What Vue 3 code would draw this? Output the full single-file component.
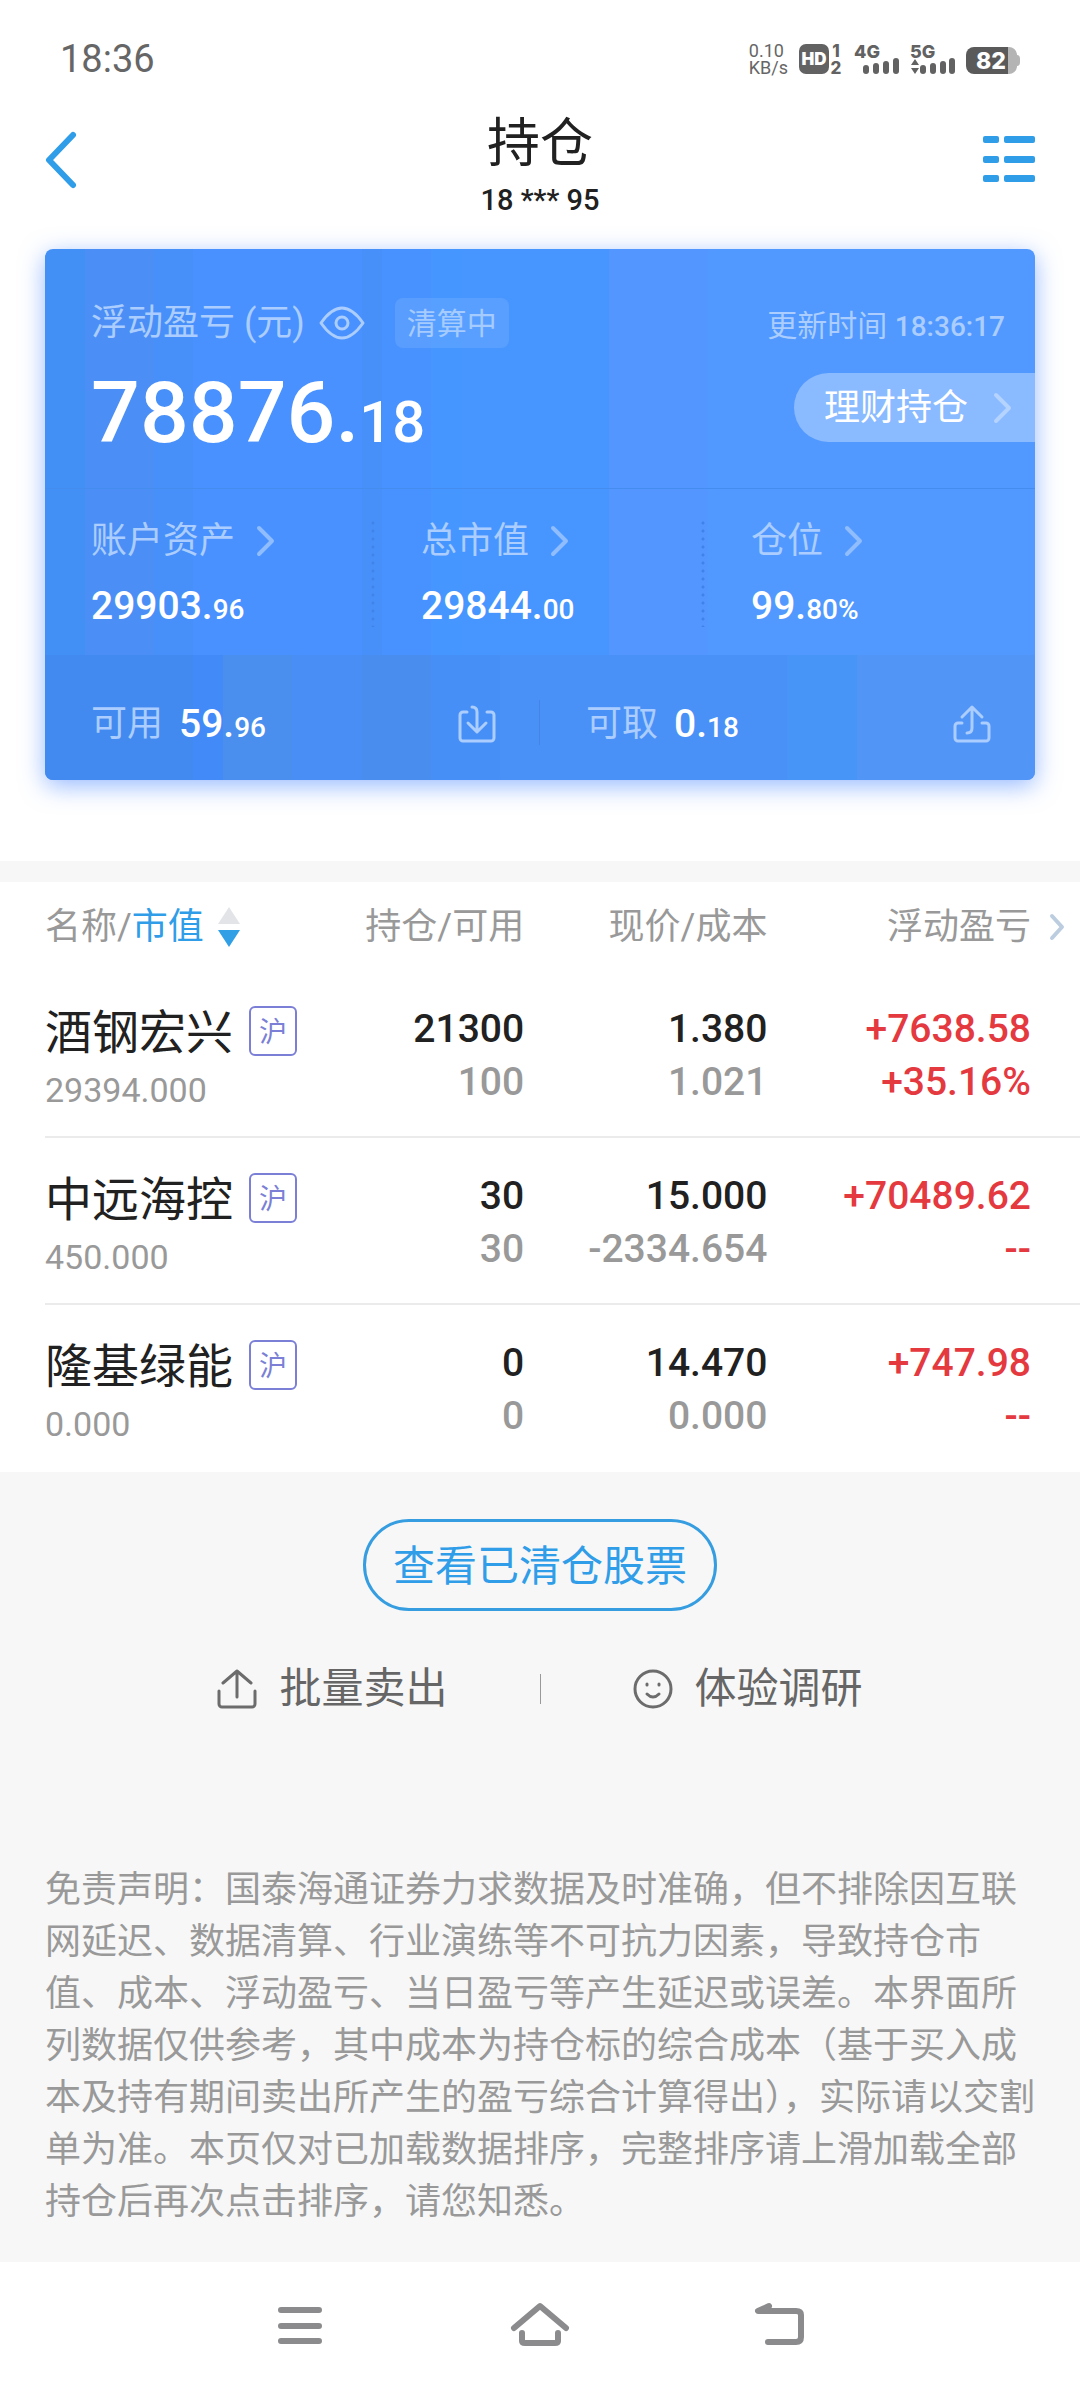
<template>
  <div class="page">
    <div class="status">
      <span class="status-time">18:36</span>
      <div class="status-icons">
        <span class="speed">0.10<br />KB/s</span>
        <svg width="44" height="32" viewBox="0 0 44 32">
          <rect x="0" y="1" width="30" height="30" rx="7" fill="#626262" />
          <text x="15" y="22" class="svg-text" font-size="17" font-weight="900" fill="#fff" text-anchor="middle">HD</text>
          <text x="37" y="14" class="svg-text" font-size="17" font-weight="800" fill="#626262" text-anchor="middle">1</text>
          <text x="37" y="31" class="svg-text" font-size="17" font-weight="800" fill="#626262" text-anchor="middle">2</text>
        </svg>
        <svg width="45" height="32" viewBox="0 0 45 32" fill="#626262">
          <text x="0" y="15" class="svg-text" font-size="18" font-weight="800">4G</text>
          <rect x="9" y="22" width="6" height="9" rx="3" />
          <rect x="19" y="20" width="6" height="11" rx="3" />
          <rect x="29" y="18" width="6" height="13" rx="3" />
          <rect x="39" y="15" width="6" height="16" rx="3" />
        </svg>
        <svg width="45" height="32" viewBox="0 0 45 32" fill="#626262">
          <text x="0" y="15" class="svg-text" font-size="18" font-weight="800">5G</text>
          <path d="M5 16l4 6H1zM5 31l4-6H1z" />
          <rect x="10" y="22" width="6" height="9" rx="3" />
          <rect x="20" y="20" width="6" height="11" rx="3" />
          <rect x="30" y="18" width="6" height="13" rx="3" />
          <rect x="39" y="15" width="6" height="16" rx="3" />
        </svg>
        <svg width="54" height="32" viewBox="0 0 54 32">
          <path d="M42 4h1a8 8 0 0 1 8 7v1q3 0 3 4v3q0 4-3 4v1a8 8 0 0 1-8 7h-1z" fill="#b4b4b4" />
          <path d="M8 4h34v27H8a8 8 0 0 1-8-8V12a8 8 0 0 1 8-8z" fill="#5a5a5a" />
          <text x="25" y="26" class="svg-text" font-size="23" font-weight="800" fill="#fff" text-anchor="middle">82</text>
        </svg>
      </div>
    </div>

    <header class="header">
      <button class="back" aria-label="返回">
        <svg width="31" height="56" viewBox="0 0 31 56">
          <path d="M28 3L4 28l24 25" fill="none" stroke="#2f9de8" stroke-width="6" stroke-linecap="round" stroke-linejoin="round" />
        </svg>
      </button>
      <div class="title">
        <h1>持仓</h1>
        <p>18 *** 95</p>
      </div>
      <button class="menu" aria-label="菜单">
        <svg width="52" height="56" viewBox="0 0 52 56" fill="#2f9de8">
          <rect x="0" y="4" width="16" height="7" rx="2" />
          <rect x="21" y="4" width="31" height="7" rx="2" />
          <rect x="0" y="24" width="16" height="7" rx="2" />
          <rect x="21" y="24" width="31" height="7" rx="2" />
          <rect x="0" y="43" width="16" height="7" rx="2" />
          <rect x="21" y="43" width="31" height="7" rx="2" />
        </svg>
      </button>
    </header>

    <section class="card">
      <div class="summary">
        <div class="summary-top">
          <span class="label">浮动盈亏 (元)</span>
          <button class="eye" aria-label="显示金额" @click="visivel = !visivel">
            <svg width="46" height="34" viewBox="0 0 46 34" fill="none" stroke="#abcdff" stroke-width="3">
              <path d="M2 17C9 7 15 2 23 2s14 5 21 15C37 27 31 32 23 32S9 27 2 17z" stroke-linejoin="round" />
              <circle cx="23" cy="17" r="6" />
            </svg>
          </button>
          <span class="clearing">清算中</span>
          <span class="updated">更新时间 <time>18:36:17</time></span>
        </div>
        <div class="summary-main">
          <strong class="profit">
            <template v-if="visivel">78876.<small>18</small></template>
            <template v-else>****</template>
          </strong>
          <button class="wealth">
            理财持仓
            <svg class="chevron" width="18" height="30" viewBox="0 0 18 30"><path d="M2 2l13 13L2 28" /></svg>
          </button>
        </div>
      </div>

      <div class="assets">
        <div v-for="item in assets" :key="item.label" class="asset">
          <button class="asset-label">
            {{ item.label }}
            <svg class="chevron" width="18" height="30" viewBox="0 0 18 30"><path d="M2 2l13 13L2 28" /></svg>
          </button>
          <div class="amount">{{ item.int }}.<small>{{ item.dec }}</small></div>
        </div>
      </div>

      <div class="cash">
        <div class="cash-item">
          <span class="label">可用</span>
          <span class="amount">59.<small>96</small></span>
          <button aria-label="转入">
            <svg width="38" height="38" viewBox="0 0 38 38" class="line-icon">
              <path d="M9 7H5a3 3 0 0 0-3 3v23a3 3 0 0 0 3 3h28a3 3 0 0 0 3-3V10a3 3 0 0 0-3-3h-4" />
              <path d="M14 2q5 0 5 5v20M10 18l9 9 9-9" />
            </svg>
          </button>
        </div>
        <div class="cash-item">
          <span class="label">可取</span>
          <span class="amount">0.<small>18</small></span>
          <button aria-label="转出">
            <svg width="38" height="38" viewBox="0 0 38 38" class="line-icon">
              <path d="M9 18H5a3 3 0 0 0-3 3v12a3 3 0 0 0 3 3h28a3 3 0 0 0 3-3V21a3 3 0 0 0-3-3h-4" />
              <path d="M14 28q5 0 5-5V2M9 12l10-10 10 10" />
            </svg>
          </button>
        </div>
      </div>
    </section>

    <section class="holdings">
      <table>
        <thead>
          <tr>
            <th class="col-name">
              <button class="sort" @click="desc = !desc">
                <span>名称/<em>市值</em></span>
                <svg width="22" height="40" viewBox="0 0 22 40">
                  <path d="M11 0l11 17H0z" :fill="desc ? '#e2e4e8' : '#309fe6'" />
                  <path d="M11 40l11-17H0z" :fill="desc ? '#309fe6' : '#e2e4e8'" />
                </svg>
              </button>
            </th>
            <th class="col-qty">持仓/可用</th>
            <th class="col-price">现价/成本</th>
            <th class="col-profit">
              <button class="more">
                浮动盈亏
                <svg width="14" height="26" viewBox="0 0 14 26">
                  <path d="M2 2l10 11L2 24" fill="none" stroke="#bccde0" stroke-width="4" stroke-linecap="round" stroke-linejoin="round" />
                </svg>
              </button>
            </th>
          </tr>
        </thead>
        <tbody>
          <tr v-for="s in sortedStocks" :key="s.name">
            <td>
              <div class="stock-name">{{ s.name }}<span class="market">沪</span></div>
              <div class="stock-value">{{ s.value }}</div>
            </td>
            <td class="num">
              <div>{{ s.qty }}</div>
              <div class="muted">{{ s.available }}</div>
            </td>
            <td class="num">
              <div>{{ s.price }}</div>
              <div class="muted">{{ s.cost }}</div>
            </td>
            <td class="num gain">
              <div>{{ s.profit }}</div>
              <div>{{ s.rate }}</div>
            </td>
          </tr>
        </tbody>
      </table>
    </section>

    <section class="footer">
      <button class="cleared">查看已清仓股票</button>
      <div class="actions">
        <button>
          <svg width="40" height="40" viewBox="0 0 40 40" fill="none" stroke="#6c6c6c" stroke-width="3" stroke-linecap="round" stroke-linejoin="round">
            <path d="M2 22v13a3 3 0 0 0 3 3h30a3 3 0 0 0 3-3V22M20 28V2M6 14L20 2l14 12" />
          </svg>
          批量卖出
        </button>
        <i class="bar"></i>
        <button>
          <svg width="40" height="40" viewBox="0 0 40 40" fill="none" stroke="#6c6c6c" stroke-width="3" stroke-linecap="round">
            <circle cx="20" cy="20" r="18" />
            <path d="M14 15v1M26 15v1M14 25q6 6 12 0" />
          </svg>
          体验调研
        </button>
      </div>
      <p class="disclaimer">免责声明：国泰海通证券力求数据及时准确，但不排除因互联网延迟、数据清算、行业演练等不可抗力因素，导致持仓市值、成本、浮动盈亏、当日盈亏等产生延迟或误差。本界面所列数据仅供参考，其中成本为持仓标的综合成本（基于买入成本及持有期间卖出所产生的盈亏综合计算得出），实际请以交割单为准。本页仅对已加载数据排序，完整排序请上滑加载全部持仓后再次点击排序，请您知悉。</p>
    </section>

    <nav class="system-nav">
      <button aria-label="最近任务">
        <svg width="60" height="46" viewBox="0 0 60 46">
          <path d="M11 8h38M11 24h38M11 39h38" />
        </svg>
      </button>
      <button aria-label="主页">
        <svg width="60" height="46" viewBox="0 0 60 46">
          <path d="M4 26L30 4l26 22" />
          <path d="M12 31v8q0 2 3 2h30q3 0 3-2v-8" />
        </svg>
      </button>
      <button aria-label="返回上一页">
        <svg width="60" height="46" viewBox="0 0 60 46">
          <path d="M19 4L8 9h38q5 0 5 4v22q0 5-5 5H18" />
        </svg>
      </button>
    </nav>
  </div>
</template>

<script setup>
import { computed, ref } from 'vue';

const visivel = ref(true);
const desc = ref(true);

const assets = [
  { label: '账户资产', int: '29903', dec: '96' },
  { label: '总市值', int: '29844', dec: '00' },
  { label: '仓位', int: '99', dec: '80%' },
];

const stocks = [
  { name: '酒钢宏兴', value: '29394.000', qty: '21300', available: '100', price: '1.380', cost: '1.021', profit: '+7638.58', rate: '+35.16%' },
  { name: '中远海控', value: '450.000', qty: '30', available: '30', price: '15.000', cost: '-2334.654', profit: '+70489.62', rate: '--' },
  { name: '隆基绿能', value: '0.000', qty: '0', available: '0', price: '14.470', cost: '0.000', profit: '+747.98', rate: '--' },
];

const sortedStocks = computed(() => {
  const sign = desc.value ? -1 : 1;
  return [...stocks].sort((a, b) => sign * (parseFloat(a.value) - parseFloat(b.value)));
});
</script>

<style>
body {
  margin: 0;
  background: #fff;
}
</style>

<style scoped>
.page {
  font-family: Roboto, "Noto Sans CJK SC", sans-serif;
  color: #212121;
  background: #fff;
}

button {
  margin: 0;
  padding: 0;
  border: 0;
  background: none;
  color: inherit;
  font: inherit;
  cursor: pointer;
}

svg {
  display: block;
  flex: none;
  overflow: visible;
}

/* keeps the smaller decimals from stretching the line box */
small {
  line-height: 1;
}

.svg-text {
  font-family: Inter, Roboto, sans-serif;
}

.status {
  display: flex;
  justify-content: space-between;
  align-items: center;
  height: 102px;
  padding: 8px 60px 0;
  color: #666;
}

.status-time {
  font-size: 38px;
}

.status-icons {
  display: flex;
  align-items: center;
  gap: 11px;
}

.speed {
  font-size: 18px;
  line-height: 17px;
}

.header {
  display: flex;
  justify-content: space-between;
  align-items: flex-start;
  height: 139px;
  padding: 0 45px;
}

.back,
.menu {
  display: flex;
  width: 52px;
  padding-top: 22px;
}

.title {
  text-align: center;
}

.title h1 {
  margin: 0;
  font-size: 53px;
  font-weight: 400;
  line-height: 68px;
}

.title p {
  margin: 0;
  font-size: 29px;
  font-weight: 500;
  line-height: 44px;
}

.card {
  margin: 0 45px 81px;
  border-radius: 8px;
  overflow: hidden;
  color: #fff;
  background: linear-gradient(90deg, #428ff5 4%, #4b8ff6 4% 11%, #478ff9 11% 15%, #4891ff 15% 32%, #4890f9 32% 34%, #4792ff 34% 39%, #4696ff 39% 42%, #4795ff 42% 57%, #5496ff 57% 67%, #5199ff 67%);
  box-shadow: 0 6px 24px rgba(66, 130, 255, 0.55);
}

.label {
  color: #abcdff;
  font-size: 36px;
  line-height: 48px;
}

.summary {
  padding: 49px 0 35px 46px;
  border-bottom: 1px solid #448ced;
}

.summary-top {
  display: flex;
  align-items: center;
  height: 50px;
  padding-right: 30px;
}

.eye {
  margin: 0 30px 0 14px;
}

.clearing {
  padding: 2px 12px 0;
  border-radius: 8px;
  background: rgba(255, 255, 255, 0.1);
  color: #a5cbff;
  font-size: 30px;
  line-height: 48px;
}

.updated {
  margin-left: auto;
  color: #abcdff;
  font-size: 30px;
}

.updated time {
  font-size: 28px;
  font-weight: 500;
}

.summary-main {
  display: flex;
  justify-content: space-between;
  align-items: flex-start;
  margin-top: 25px;
}

.profit {
  font-size: 86px;
  font-weight: 500;
  line-height: 80px;
}

.profit small {
  font-size: 58px;
}

.wealth {
  display: flex;
  align-items: center;
  gap: 26px;
  height: 69px;
  padding: 0 23px 0 30px;
  border-radius: 35px 0 0 35px;
  background: rgba(255, 255, 255, 0.33);
  font-size: 36px;
  line-height: 48px;
}

.chevron {
  fill: none;
  stroke: #8fbdff;
  stroke-width: 4;
  stroke-linecap: round;
  stroke-linejoin: round;
}

.wealth .chevron {
  stroke: #b5d3ff;
}

.assets {
  display: grid;
  grid-template-columns: repeat(3, 1fr);
}

.asset {
  position: relative;
  padding: 28px 0 25px 46px;
}

.asset:not(:last-child)::after {
  content: "";
  position: absolute;
  top: 30px;
  right: 0;
  width: 4px;
  height: 108px;
  background: radial-gradient(circle, #3f83e8 1px, transparent 2px) 0 0 / 4px 8px;
}

.asset-label {
  display: flex;
  align-items: center;
  gap: 22px;
  color: #abcdff;
  font-size: 36px;
  line-height: 48px;
}

.asset .amount {
  margin-top: 17px;
}

.amount {
  font-size: 39px;
  font-weight: 500;
  line-height: 48px;
}

.amount small {
  font-size: 28px;
}

.cash {
  display: grid;
  grid-template-columns: 1fr 1fr;
  background: linear-gradient(90deg, #428aef 15%, #428af8 15% 18%, #4a8fee 18% 25%, #488ef5 25% 32%, #498eee 32% 39%, #468ff6 39% 46%, #4a91f7 46% 75%, #4795f6 75% 82%, #5195f7 82%);
}

.cash-item {
  display: flex;
  align-items: center;
  height: 113px;
  padding: 12px 44px 0 46px;
}

.cash-item:first-child {
  background: linear-gradient(#4285e6, #4285e6) right 45px / 1px 45px no-repeat;
}

.cash-item .amount {
  margin-left: 16px;
}

.cash-item button {
  margin-left: auto;
}

.line-icon {
  fill: none;
  stroke: #abcdff;
  stroke-width: 3;
  stroke-linecap: round;
  stroke-linejoin: round;
}

.holdings {
  padding-left: 45px;
  border-top: 21px solid #f7f7f7;
}

table {
  width: 100%;
  table-layout: fixed;
  border-collapse: separate;
  border-spacing: 0;
}

th {
  height: 89px;
  padding: 0;
  color: #999;
  font-size: 36px;
  font-weight: 400;
  line-height: 48px;
  text-align: right;
}

.col-name {
  width: 27.3%;
}

.col-qty {
  width: 19%;
}

.col-price {
  width: 23.5%;
}

.col-profit {
  width: 30.2%;
}

.sort {
  display: flex;
  align-items: center;
  gap: 14px;
}

.sort em {
  color: #2f9de8;
  font-style: normal;
}

.more {
  display: flex;
  align-items: center;
  gap: 19px;
  margin-left: auto;
  padding-right: 16px;
}

td {
  height: 135px;
  padding: 32px 0 0;
  vertical-align: top;
}

tbody tr:not(:last-child) td {
  border-bottom: 2px solid #ebebeb;
  height: 133px;
}

.stock-name {
  display: flex;
  align-items: center;
  gap: 16px;
  font-size: 47px;
  line-height: 60px;
  white-space: nowrap;
}

.market {
  box-sizing: border-box;
  width: 48px;
  height: 50px;
  margin-bottom: 4px;
  border: 2px solid #7b7fd6;
  border-radius: 6px;
  color: #7b7fd6;
  font-size: 28px;
  line-height: 50px;
  text-align: center;
}

.stock-value {
  color: #999;
  font-size: 34px;
  line-height: 54px;
}

.num {
  font-size: 39px;
  font-weight: 500;
  line-height: 53px;
  text-align: right;
}

.gain {
  padding-right: 49px;
  color: #e4393f;
}

.muted {
  color: #999;
}

.footer {
  padding: 47px 45px 34px;
  background: #f7f7f7;
}

.cleared {
  display: block;
  margin: 0 auto;
  padding: 4px 27px 0;
  border: 3px solid #359de0;
  border-radius: 46px;
  color: #2f9de8;
  font-size: 42px;
  line-height: 82px;
}

.actions {
  display: flex;
  justify-content: center;
  align-items: center;
  gap: 92px;
  margin-top: 54px;
  color: #666;
  font-size: 42px;
  line-height: 48px;
}

.actions button {
  display: flex;
  align-items: center;
  gap: 22px;
}

.bar {
  width: 1px;
  height: 30px;
  background: #999;
}

.disclaimer {
  margin: 151px 0 0;
  color: #999;
  font-size: 36px;
  line-height: 52px;
}

.system-nav {
  display: flex;
  justify-content: center;
  align-items: center;
  gap: 180px;
  height: 126px;
  background: #fff;
}

.system-nav svg {
  fill: none;
  stroke: #8b8b8d;
  stroke-width: 6;
  stroke-linecap: round;
  stroke-linejoin: round;
}
</style>
